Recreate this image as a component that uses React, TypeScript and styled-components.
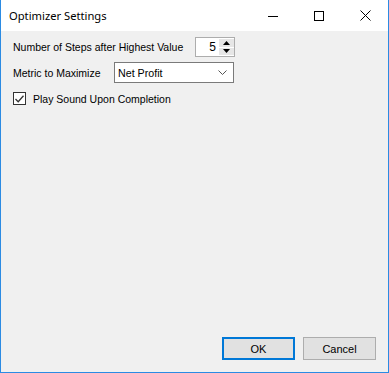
import styled, { createGlobalStyle } from 'styled-components';

const GlobalStyle = createGlobalStyle`
  html, body {
    margin: 0;
    padding: 0;
    background: #ffffff;
  }
  * {
    box-sizing: border-box;
  }
`;

const Window = styled.div`
  width: 389px;
  height: 373px;
  display: flex;
  flex-direction: column;
  border: 1px solid #2b8be3;
  border-top: none;
  background: #f0f0f0;
  font-family: 'Liberation Sans', Arial, sans-serif;
  font-size: 10.5px;
  color: #000;
`;

const TitleBar = styled.div`
  height: 31px;
  display: flex;
  align-items: center;
  background: #ffffff;
`;

const Title = styled.div`
  flex: 1;
  padding-left: 8px;
  padding-bottom: 1px;
  font-family: 'Noto Sans', 'Open Sans', sans-serif;
  font-size: 11.2px;
`;

const CaptionButton = styled.div`
  width: 46px;
  height: 31px;
  display: flex;
  align-items: center;
  justify-content: center;
`;

const Body = styled.div`
  flex: 1;
  display: flex;
  flex-direction: column;
  padding: 6px 12px 12px 11px;
`;

const Row = styled.div<{ $gap?: number }>`
  display: flex;
  align-items: center;
  margin-bottom: ${(p) => p.$gap ?? 5}px;
`;

const Label = styled.span<{ $width: number }>`
  width: ${(p) => p.$width}px;
  padding-left: 1px;
`;

const NumberBox = styled.div`
  width: 40px;
  height: 20px;
  display: flex;
  border: 1px solid #adadad;
  background: #fff;
`;

const NumberValue = styled.div`
  flex: 1;
  text-align: right;
  padding-right: 3px;
  font-size: 12px;
  line-height: 18px;
`;

const Spinner = styled.div`
  width: 15px;
  display: flex;
  flex-direction: column;
  gap: 1px;
  padding: 1px 0 1px 0;
`;

const SpinHalf = styled.div`
  flex: 1;
  background: #e6e6e6;
  display: flex;
  align-items: center;
  justify-content: center;
`;

const Combo = styled.div`
  width: 120px;
  height: 21px;
  display: flex;
  align-items: center;
  border: 1px solid #7a7a7a;
  background: #fff;
  padding-left: 3px;
  padding-right: 6px;
`;

const ComboText = styled.span`
  flex: 1;
  font-size: 10.7px;
`;

const CheckRow = styled.label`
  display: flex;
  align-items: center;
  gap: 7px;
  margin-top: 3px;
  padding-left: 1px;
`;

const CheckBox = styled.span`
  width: 13px;
  height: 13px;
  border: 1px solid #333;
  background: #fff;
  display: flex;
  align-items: center;
  justify-content: center;
`;

const Footer = styled.div`
  margin-top: auto;
  display: flex;
  justify-content: flex-end;
  gap: 8px;
`;

const Button = styled.button<{ $default?: boolean }>`
  width: 73px;
  height: 23px;
  padding: 0;
  background: #e1e1e1;
  border: ${(p) => (p.$default ? '2px solid #0078d7' : '1px solid #adadad')};
  font-family: 'Liberation Sans', Arial, sans-serif;
  font-size: 11px;
  color: #000;
`;

export default function App() {
  return (
    <>
      <GlobalStyle />
      <Window>
        <TitleBar>
          <Title>Optimizer Settings</Title>
          <CaptionButton>
            <svg width="10" height="10" viewBox="0 0 10 10">
              <path d="M0 5.5h10" stroke="#000" strokeWidth="1" />
            </svg>
          </CaptionButton>
          <CaptionButton>
            <svg width="10" height="10" viewBox="0 0 10 10">
              <rect x="0.5" y="0.5" width="9" height="9" fill="none" stroke="#000" strokeWidth="1" />
            </svg>
          </CaptionButton>
          <CaptionButton>
            <svg width="11" height="11" viewBox="0 0 11 11">
              <path d="M0.5 0.5L10.5 10.5M10.5 0.5L0.5 10.5" stroke="#000" strokeWidth="1" />
            </svg>
          </CaptionButton>
        </TitleBar>
        <Body>
          <Row>
            <Label $width={183}>Number of Steps after Highest Value</Label>
            <NumberBox>
              <NumberValue>5</NumberValue>
              <Spinner>
                <SpinHalf>
                  <svg width="7" height="4" viewBox="0 0 7 4">
                    <path d="M3.5 0L7 4H0z" fill="#000" />
                  </svg>
                </SpinHalf>
                <SpinHalf>
                  <svg width="7" height="4" viewBox="0 0 7 4">
                    <path d="M0 0h7L3.5 4z" fill="#000" />
                  </svg>
                </SpinHalf>
              </Spinner>
            </NumberBox>
          </Row>
          <Row $gap={6}>
            <Label $width={102}>Metric to Maximize</Label>
            <Combo>
              <ComboText>Net Profit</ComboText>
              <svg width="9" height="5" viewBox="0 0 9 5">
                <path d="M0.5 0.5L4.5 4.5L8.5 0.5" fill="none" stroke="#555" strokeWidth="1" />
              </svg>
            </Combo>
          </Row>
          <CheckRow>
            <CheckBox>
              <svg width="9" height="8" viewBox="0 0 9 8">
                <path d="M0.5 4L3.2 6.8L8.5 0.8" fill="none" stroke="#333" strokeWidth="1.3" />
              </svg>
            </CheckBox>
            <span>Play Sound Upon Completion</span>
          </CheckRow>
          <Footer>
            <Button $default>OK</Button>
            <Button>Cancel</Button>
          </Footer>
        </Body>
      </Window>
    </>
  );
}
